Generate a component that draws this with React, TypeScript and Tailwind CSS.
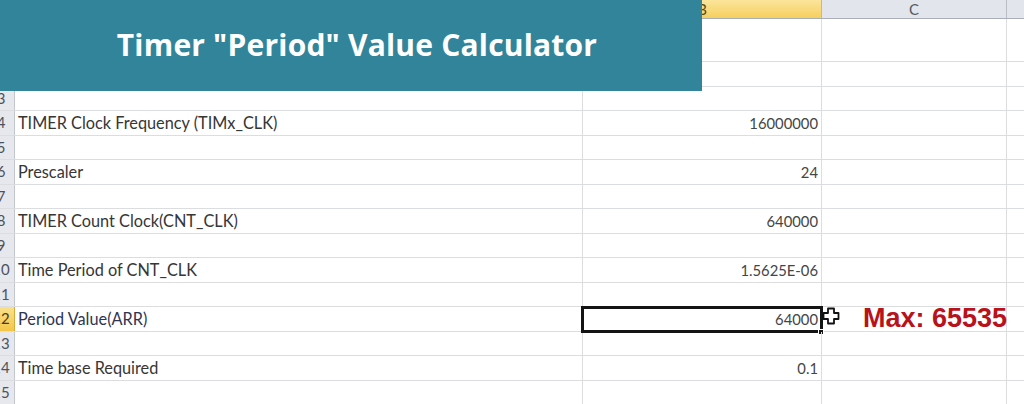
import React from "react";

type Row = { n: number; h: string; label?: string; value?: string; selected?: boolean };

const rows: Row[] = [
  { n: 1, h: "h-[43px]" },
  { n: 2, h: "h-[24.5px]" },
  { n: 3, h: "h-[24.5px]" },
  { n: 4, h: "h-[24.5px]", label: "TIMER Clock Frequency (TIMx_CLK)", value: "16000000" },
  { n: 5, h: "h-[24.5px]" },
  { n: 6, h: "h-[24.5px]", label: "Prescaler", value: "24" },
  { n: 7, h: "h-[24.5px]" },
  { n: 8, h: "h-[24.5px]", label: "TIMER Count Clock(CNT_CLK)", value: "640000" },
  { n: 9, h: "h-[24.5px]" },
  { n: 10, h: "h-[24.5px]", label: "Time Period of CNT_CLK", value: "1.5625E-06" },
  { n: 11, h: "h-[24.5px]" },
  { n: 12, h: "h-[24.5px]", label: "Period Value(ARR)", value: "64000", selected: true },
  { n: 13, h: "h-[24.5px]" },
  { n: 14, h: "h-[24.5px]", label: "Time base Required", value: "0.1" },
  { n: 15, h: "h-[24.5px]" },
];

function CrossCursor() {
  return (
    <svg width="20" height="20" viewBox="0 0 20 20" className="absolute left-[821px] top-[-2px]">
      <path
        d="M7 2.5 H13 V7 H17.5 V13 H13 V17.5 H7 V13 H2.5 V7 H7 Z"
        fill="#ffffff"
        stroke="#111111"
        strokeWidth="1.8"
        strokeLinejoin="round"
      />
    </svg>
  );
}

export default function App() {
  return (
    <div
      className="relative w-[1024px] h-[404px] overflow-hidden bg-white text-[#363636]"
      style={{ fontFamily: "Lato, 'Open Sans', sans-serif" }}
    >
      {/* column header */}
      <div className="flex h-[19px] border-b border-[#a9afb8] bg-[#e2e5eb]">
        <div className="w-[15px] shrink-0 border-r border-[#b9bec6]" />
        <div className="w-[568px] shrink-0 border-r border-[#b9bec6] flex items-center justify-center text-[15px] text-[#4a4f57]">A</div>
        <div className="w-[239px] shrink-0 border-r border-[#e0b94a] bg-gradient-to-b from-[#fbe59a] to-[#f6cf5c] flex items-center justify-center text-[15px] text-[#5a4a1a]">B</div>
        <div className="w-[185px] shrink-0 border-r border-[#b9bec6] flex items-center justify-center text-[15px] text-[#555b63]">C</div>
        <div className="flex-1" />
      </div>

      {rows.map((r) => (
        <div key={r.n} className={`flex ${r.h} border-b border-[#dcdde0]`}>
          <div
            className={`w-[15px] shrink-0 overflow-hidden flex items-center border-r ${
              r.selected
                ? "bg-gradient-to-b from-[#fbe08a] to-[#f3c646] border-[#d9a93a] text-[#4a3a10]"
                : "bg-[#e6e8ed] border-[#c2c6cd] text-[#4e535b]"
            }`}
          >
            <div className="w-[30px] ml-[-14px] shrink-0 text-center text-[15px] leading-none">{r.n}</div>
          </div>
          <div className="w-[568px] shrink-0 border-r border-[#dcdde0] flex items-center pl-[3px] text-[16.3px] whitespace-nowrap">
            <span className={r.selected ? "text-[#2f3550]" : ""}>{r.label}</span>
          </div>
          <div className="relative w-[239px] shrink-0 border-r border-[#dcdde0] flex items-center justify-end pr-[3px] text-[14.8px] text-[#454545]">
            {r.value}
            {r.selected && (
              <>
                <div className="absolute left-[-2px] top-[-1px] right-[-2px] bottom-[-2px] border-[3px] border-[#141414]" />
                <div className="absolute right-[-3px] bottom-[-4px] w-[6px] h-[6px] bg-[#141414] border border-white" />
              </>
            )}
          </div>
          <div className="relative w-[185px] shrink-0 border-r border-[#dcdde0] flex items-center">
            {r.selected && (
              <span
                className="ml-[41px] text-[27px] font-bold text-[#b8121b] leading-none"
                style={{ fontFamily: "'Liberation Sans', Arial, sans-serif" }}
              >
                Max:&nbsp;65535
              </span>
            )}
          </div>
          <div className="flex-1" />
        </div>
      ))}

      {/* cursor over the selection */}
      <div className="absolute left-0 top-[308px] w-0 h-0">
        <CrossCursor />
      </div>

      {/* title banner */}
      <div className="absolute left-0 top-0 w-[702px] h-[91px] bg-[#32849a] flex items-center justify-center pl-[12px] pb-[2px]">
        <span
          className="text-white font-bold text-[30px] leading-none tracking-[0.2px]"
          style={{ fontFamily: "'Open Sans', 'Liberation Sans', sans-serif" }}
        >
          Timer "Period" Value Calculator
        </span>
      </div>
    </div>
  );
}
